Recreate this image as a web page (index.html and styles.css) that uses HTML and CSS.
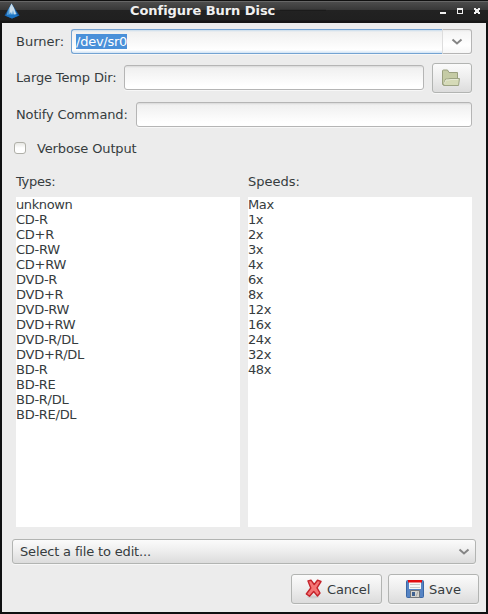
FILE: index.html
```html
<!DOCTYPE html>
<html lang="en">
<head>
<meta charset="utf-8">
<title>Configure Burn Disc</title>
<link rel="stylesheet" href="styles.css">
</head>
<body>
<div class="window">
  <header class="titlebar">
    <svg class="app-icon" width="16" height="16" viewBox="0 0 16 16">
      <path d="M7.500 .5L.5 12.500L8 15.500L15.500 12.500Z" fill="#15569c"/>
      <path d="M7.500 .5L4 7L2.500 12L8 14L13 11Z" fill="#4d9ad6"/>
      <path d="M7.500 .5L5.500 5V11L7 9L8 12L9 7L10 12L12 11L10 5Z" fill="#c9dcea"/>
      <path d="M1 12.500L5 11.500H11L15 12.500L8 15.500Z" fill="#1b74c4"/>
    </svg>
    <h1 class="title">Configure Burn Disc</h1>
    <i class="groove"></i>
    <svg class="controls" width="42" height="10" viewBox="0 0 42 10" fill="#eee" shape-rendering="crispEdges">
      <path d="M1 7h6v2H1z"/>
      <path d="M18 3h6v6h-6zM19 5v3h4V5z" fill-rule="evenodd"/>
      <path d="M35 3h2v1h2V3h2v2h-1v2h1v2h-2V8h-2v1h-2V7h1V5h-1z"/>
    </svg>
  </header>
  <main class="content">
    <div class="row burner">
      <label>Burner:</label>
      <div class="field combo"><div class="entry"><span class="selected">/dev/sr0</span></div>
        <div class="drop"><svg width="12" height="8" viewBox="0 0 12 8"><path d="M1.500 1.500L6 5.500L10.500 1.500" fill="none" stroke="#858585" stroke-width="2"/></svg></div>
      </div>
    </div>
    <div class="row temp">
      <label>Large Temp Dir:</label>
      <div class="field"></div>
      <button class="button browse"><svg width="20" height="18" viewBox="0 0 20 18">
        <path d="M1.500 15.500V2Q1.500 1 2.500 1H6.500L8 3.500H16.500V15.500Z" fill="#c5cba5" stroke="#9aa07f"/>
        <path d="M2.500 16L4.500 10H7L9 9.500H18.500L17.500 16.500H2.500Z" fill="#d5dab7" stroke="#9ca383"/>
        <path d="M3 15L5 11H8L10 10.500H17" fill="none" stroke="#e6e9d4"/>
      </svg></button>
    </div>
    <div class="row notify">
      <label>Notify Command:</label>
      <div class="field"></div>
    </div>
    <div class="row check"><i class="box"></i><span>Verbose Output</span></div>
    <div class="lists">
      <section><h2 class="types">Types:</h2>
        <ul class="list"><li class="lower">unknown</li><li>CD-R</li><li>CD+R</li><li>CD-RW</li><li>CD+RW</li><li>DVD-R</li><li>DVD+R</li><li>DVD-RW</li><li>DVD+RW</li><li>DVD-R/DL</li><li>DVD+R/DL</li><li>BD-R</li><li>BD-RE</li><li>BD-R/DL</li><li>BD-RE/DL</li></ul>
      </section>
      <section><h2>Speeds:</h2>
        <ul class="list speeds"><li>Max</li><li>1x</li><li>2x</li><li>3x</li><li>4x</li><li>6x</li><li>8x</li><li>12x</li><li>16x</li><li>24x</li><li>32x</li><li>48x</li></ul>
      </section>
    </div>
    <div class="select button"><span>Select a file to edit...</span>
      <svg width="12" height="8" viewBox="0 0 12 8"><path d="M1.500 1.500L6 5.500L10.500 1.500" fill="none" stroke="#858585" stroke-width="2"/></svg>
    </div>
    <footer class="actions">
      <button class="button action"><svg width="18" height="20" viewBox="0 0 18 20">
        <ellipse cx="8" cy="18" rx="6" ry="1.500" fill="#cecece"/>
        <path d="M3 2L6 1.200L9.200 5.500L12.500 1.200L16 2.500L12 8.800L15 14L12.500 17L8.700 12.500L4.500 17.200L1.300 15L5.800 9Z" fill="#f57575" stroke="#c4232b" stroke-width="1.400" stroke-linejoin="round"/>
      </svg><span class="cancel">Cancel</span></button>
      <button class="button action"><svg class="icon-save" width="20" height="20" viewBox="0 0 20 20">
        <rect x="1.500" y="1.500" width="17" height="17" rx="1" fill="#5684c4" stroke="#3a67a5"/>
        <path d="M4 1h12v9H4z" fill="#f7f7f7"/><path d="M3 1h14v2.500H3z" fill="#e30c10"/>
        <path d="M5 5.500h10M5 8.500h10" stroke="#c9c9c9"/>
        <path d="M5.500 11.500h9v7h-9z" fill="#d5d5cf" stroke="#72777c"/>
        <path d="M7 13h3v4H7z" fill="#3f6190"/><path d="M13 12.500l-2 5" stroke="#aaa"/>
      </svg><span>Save</span></button>
    </footer>
  </main>
</div>
</body>
</html>
```
FILE: styles.css
```css
* { box-sizing: border-box; }
body { margin: 0; font: 13px/15px "DejaVu Sans", sans-serif; color: #363c3e; }
.window { width: 488px; height: 614px; background: #0f1011; padding: 0 2px 2px; display: flex; flex-direction: column; }
.titlebar { height: 23px; flex: none; margin: 0 -2px; padding: 0 7px 0 4px; display: flex; align-items: flex-start; background: linear-gradient(#101010 0 1px, #666 1px 2px, #4c4c4c 2px, #383838 10px, #222 10px, #202020 20px, #151515 21px); }
.app-icon { margin-top: 3px; flex: none; }
.title { margin: 3px 0 0 110px; width: 150px; font-size: 13px; line-height: 16px; color: #f0f0f0; white-space: nowrap; letter-spacing: -0.05px; }
.groove { width: 46px; height: 2px; margin-top: 9px; background: linear-gradient(#333 1px, #1b1b1b 1px); }
.controls { margin: 5px 0 0 auto; flex: none; }
.content { flex: 1; background: #ececec; display: flex; flex-direction: column; }
.row { display: flex; align-items: center; padding: 0 14px; white-space: nowrap; flex: none; letter-spacing: -0.14px; }
.field { flex: 1; height: 25px; border: 1px solid #b5b5b5; border-radius: 3px; background: linear-gradient(#d8d8d8 0, #f0f0f0 2px, #fff 20px); box-shadow: 0 1px #f7f7f7; }
.burner { height: 37px; letter-spacing: 0; }
.burner label { width: 55px; }
.combo { display: flex; background: none; border: 0; }
.entry { flex: 1; border: 1px solid #74a3d2; border-right: 0; border-radius: 3px 0 0 3px; padding: 4px 0 0 4px; background: linear-gradient(#c8dced 0, #f0f0f0 2px, #fff 20px, #d0e3f5 23px); }
.selected { display: inline-block; height: 15px; background: #4a90d9; color: #fff; letter-spacing: -0.25px; }
.drop { width: 30px; border: 1px solid #b5b5b5; border-left-color: #ddd; border-radius: 0 3px 3px 0; background: linear-gradient(#e8e8e8, #f5f5f5 2px, #fff 15px, #f6f6f6); display: flex; align-items: center; justify-content: center; padding-right: 1px; }
.temp { height: 35px; }
.temp label { width: 108px; }
.button { border: 1px solid #b2b4b2; border-radius: 3px; background: linear-gradient(#fbfbfb, #ededed 50%, #dcdcdc); box-shadow: 0 1px #f7f7f7; color: inherit; font: inherit; padding: 0; display: flex; align-items: center; }
.browse { width: 40px; height: 30px; margin-left: 8px; justify-content: center; padding-right: 3px; }
.notify { height: 39px; }
.notify label { width: 120px; }
.check { height: 28px; padding-left: 12px; }
.box { width: 12px; height: 12px; border: 1px solid #b0b0a9; border-radius: 3px; margin-right: 11px; background: linear-gradient(#e7e7e3, #fff 5px); }
.lists { display: grid; grid-template-columns: 1fr 1fr; gap: 8px; padding: 12px 14px 0; }
.lists h2 { margin: 0; font: inherit; height: 23px; }
.lists .types { letter-spacing: -0.3px; }
.list { margin: 0; padding: 0; height: 330px; background: #fff; list-style: none; letter-spacing: -0.27px; }
.list .lower, .speeds { letter-spacing: -0.4px; }
.select { height: 25px; margin: 12px 10px 0; padding: 0 5px 0 7px; justify-content: space-between; letter-spacing: -0.16px; }
.actions { display: flex; justify-content: flex-end; gap: 6px; padding: 10px 7px 0; }
.action { width: 91px; height: 30px; gap: 4px; padding-left: 13px; }
.cancel { letter-spacing: -0.15px; }
.icon-save { margin-left: 3px; }
```
